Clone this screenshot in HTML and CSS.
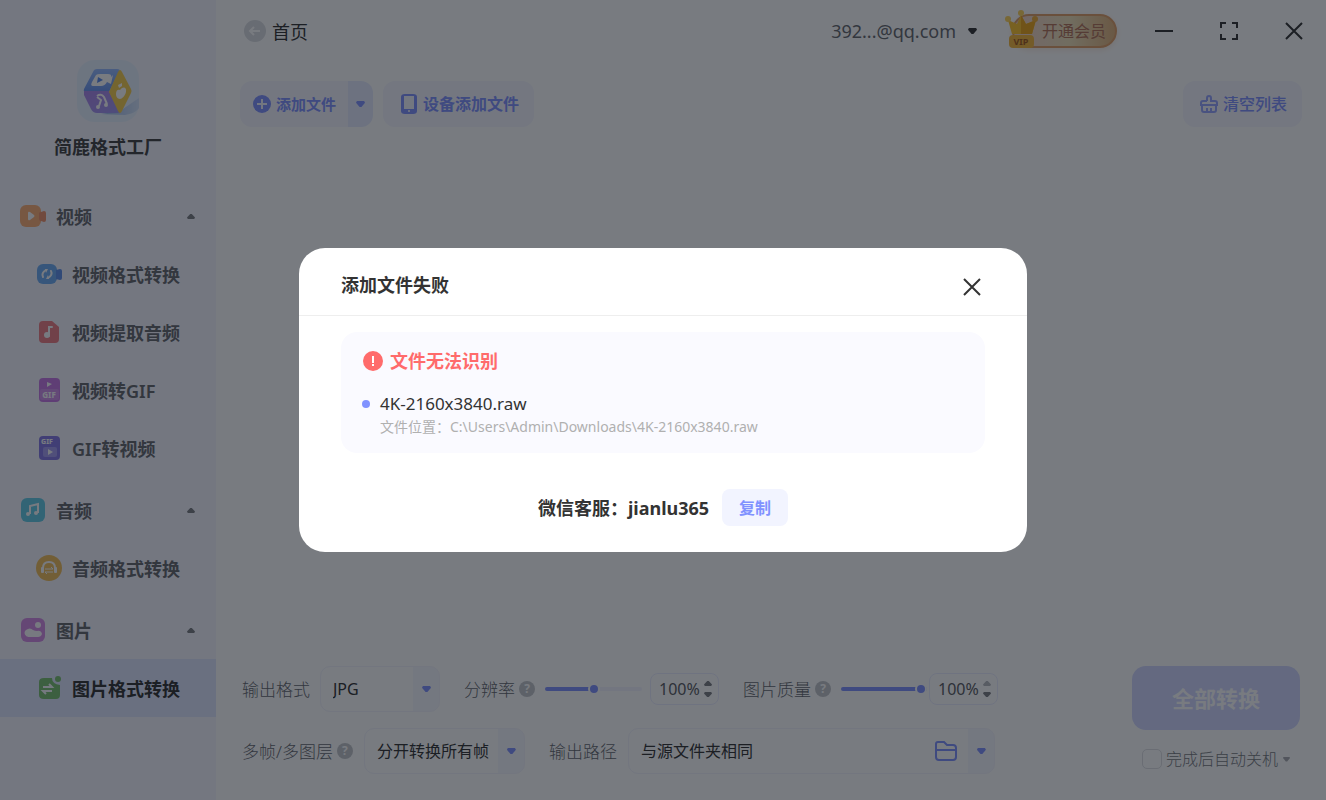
FILE: index.html
```html
<!DOCTYPE html>
<html lang="zh-CN">
<head>
    <meta charset="UTF-8">
    <title>简鹿格式工厂</title>
    <link rel="stylesheet" href="styles.css">
</head>
<body>
    <aside class="sidebar">
        <div class="brand">
            <svg class="brand-logo" viewBox="0 0 62 62">
                <defs>
                    <linearGradient id="cubeTop" x1="0" y1="0" x2="0" y2="1"><stop offset="0" stop-color="#8fb6ff"/><stop offset="1" stop-color="#5c8cee"/></linearGradient>
                    <linearGradient id="cubeLeft" x1="0" y1="0" x2="1" y2="1"><stop offset="0" stop-color="#a77be8"/><stop offset="1" stop-color="#9a90f4"/></linearGradient>
                    <linearGradient id="cubeShadow" x1="0" y1="0" x2="1" y2="0"><stop offset="0" stop-color="#8fb0e8"/><stop offset="1" stop-color="#d4e4fb"/></linearGradient>
                </defs>
                <rect width="62" height="62" rx="18" fill="#e6f1ff"/>
                <path d="M43 51L62 38v10c-3 4-8 6-14 7l-24-1z" fill="url(#cubeShadow)"/>
                <path d="M20 9h20q4 0 2 3L32 32H8q-2-1-1-3l9-17q1-3 4-3z" fill="url(#cubeTop)"/>
                <path d="M7 31h25l11 21q0 1-3 1H20q-4 0-6-4L7 35z" fill="url(#cubeLeft)"/>
                <path d="M43 10q1 0 2 2l9 17q1 2 0 4l-9 18q-1 2-2 2-1 0-2-2l-9-19 9-20q1-2 2-2z" fill="#f7cb3c"/>
                <path d="M19 15q1-1 4-1h8q4 0 3 3l2-2-2 9-4-2q-2 4-6 4H16q-3 0-1-4z" fill="#fff"/>
                <path d="M21 17l5 3-6 3z" fill="#4a80ea"/>
                <path d="M20 36q4-3 7 1l3 7M20 37l4 3-2 6" fill="none" stroke="#fff" stroke-width="2"/>
                <circle cx="21" cy="47" r="2" fill="#fff"/><circle cx="29" cy="45" r="2" fill="#fff"/>
                <path d="M43 30c3-4 7-3 6 2-1 4-4 7-6 7-3 0-4-3-4-5 0-4 2-5 4-4z" fill="#fff"/><path d="M41 25l4-2v3l-3 2z" fill="#fff"/>
            </svg>
            <h1 class="brand-name">简鹿格式工厂</h1>
        </div>
        <nav class="menu">
            <div class="menu-group">
                <a href="#" class="menu-title">
                    <svg class="menu-icon" viewBox="0 0 26 26"><rect x="0" y="2" width="21" height="22" rx="6" fill="#ff9f55"/><path d="M19 10q0-1 2-1l3-1q2 0 2 2v7q0 2-2 2l-3-1q-2 0-2-2z" fill="#f07b4a"/><path d="M8 10q0-2 2-1l4 3q1 1 0 2l-4 3q-2 1-2-1z" fill="#fff"/></svg>
                    <span>视频</span><i class="caret up"></i>
                </a>
                <a href="#" class="menu-item">
                    <svg class="menu-icon" viewBox="0 0 26 26"><rect x="1" y="3" width="20" height="20" rx="6" fill="#4e9cf2"/><path d="M20 9l4-1q2 0 2 2v7q0 2-2 2l-4-1z" fill="#3a78e6"/><path d="M10 9q-5 3-3 7M12 17q5-3 3-7" fill="none" stroke="#fff" stroke-width="2" stroke-linecap="round"/><path d="M9 8h3l-2 4zM13 18h-3l2-4z" fill="#fff"/></svg>
                    <span>视频格式转换</span>
                </a>
                <a href="#" class="menu-item">
                    <svg class="menu-icon" viewBox="0 0 26 26"><path d="M7 2h9l7 6v12q0 4-4 4H7q-4 0-4-4V6q0-4 4-4z" fill="#f06268"/><path d="M13 17V8q1 0 3 0" fill="none" stroke="#fff" stroke-width="2" stroke-linecap="round"/><circle cx="11" cy="16" r="3" fill="#fff"/></svg>
                    <span>视频提取音频</span>
                </a>
                <a href="#" class="menu-item">
                    <svg class="menu-icon" viewBox="0 0 26 26"><rect x="3" y="1" width="21" height="24" rx="4" fill="#bd5be2"/><path d="M11 5l5 2-5 3z" fill="#fff"/><rect x="4" y="12" width="19" height="11" rx="2" fill="#c878e8"/><text class="icon-text" x="13" y="21" font-size="8" text-anchor="middle">GIF</text></svg>
                    <span>视频转GIF</span>
                </a>
                <a href="#" class="menu-item">
                    <svg class="menu-icon" viewBox="0 0 26 26"><rect x="3" y="1" width="21" height="24" rx="4" fill="#6a5be0"/><text class="icon-text" x="11" y="9" font-size="7" text-anchor="middle">GIF</text><rect x="7" y="12" width="14" height="10" rx="2" fill="#9488f0"/><path d="M12 14l5 3-5 3z" fill="#fff"/></svg>
                    <span>GIF转视频</span>
                </a>
            </div>
            <div class="menu-group">
                <a href="#" class="menu-title">
                    <svg class="menu-icon" viewBox="0 0 26 26"><rect x="1" y="1" width="24" height="24" rx="6" fill="#40c2e2"/><path d="M10 17V9l8-2v9" fill="none" stroke="#fff" stroke-width="2"/><circle cx="8" cy="17" r="2" fill="#fff"/><circle cx="16" cy="16" r="2" fill="#fff"/></svg>
                    <span>音频</span><i class="caret up"></i>
                </a>
                <a href="#" class="menu-item">
                    <svg class="menu-icon" viewBox="0 0 26 26"><circle cx="13" cy="13" r="13" fill="#f2b233"/><path d="M7 13q0-6 6-6t6 6" fill="none" stroke="#fff" stroke-width="2"/><rect x="5" y="12" width="3" height="6" rx="1" fill="#fff"/><rect x="18" y="12" width="3" height="6" rx="1" fill="#fff"/><path d="M9 14h8l-2-2M17 17H9l2 2" fill="none" stroke="#fff" stroke-width="1"/></svg>
                    <span>音频格式转换</span>
                </a>
            </div>
            <div class="menu-group">
                <a href="#" class="menu-title">
                    <svg class="menu-icon" viewBox="0 0 26 26"><rect x="1" y="1" width="24" height="24" rx="6" fill="#cf72e0"/><circle cx="18" cy="8" r="3" fill="#fff"/><path d="M9 20a4 4 0 0 1-3-7q4-3 7 0 2 1 4 1 4-1 5 3-1 3-4 3z" fill="#fff"/></svg>
                    <span>图片</span><i class="caret up"></i>
                </a>
                <a href="#" class="menu-item active">
                    <svg class="menu-icon" viewBox="0 0 26 26"><path d="M8 3h8q0 6 8 7v10q0 4-4 4H8q-5 0-5-4V7q0-4 5-4z" fill="#62b850"/><circle cx="22" cy="4" r="3" fill="#62b850"/><path d="M7 12h9l-3-3M16 16H7l3 3" fill="none" stroke="#fff" stroke-width="2"/></svg>
                    <span>图片格式转换</span>
                </a>
            </div>
        </nav>
    </aside>

    <main class="main">
        <header class="topbar">
            <button class="back">
                <svg viewBox="0 0 22 22"><circle cx="11" cy="11" r="11" fill="#dcdee2"/><path d="M16 11H6M10 7l-4 4 4 4" fill="none" stroke="#fff" stroke-width="2"/></svg>
                <span>首页</span>
            </button>
            <div class="topbar-right">
                <button class="account">392...@qq.com<i class="caret"></i></button>
                <button class="vip">
                    <svg class="crown" viewBox="0 0 36 40">
                        <path d="M4 11l9 4 4-9 5 9 10-4-4 14H8z" fill="#ffc530"/>
                        <path d="M17 6l5 9 10-4-4 14H17z" fill="#eda71c"/>
                        <circle cx="4" cy="10" r="3" fill="#ffd45c"/><circle cx="17" cy="4" r="3" fill="#ffd45c"/><circle cx="31" cy="10" r="3" fill="#efad38"/>
                        <rect x="5" y="26" width="25" height="13" rx="4" fill="#f6b93d"/>
                        <text x="17" y="36" font-size="9" text-anchor="middle" class="vip-text">VIP</text>
                    </svg>
                    <span>开通会员</span>
                </button>
                <div class="window-btns">
                    <button aria-label="最小化"><svg viewBox="0 0 18 18"><path d="M0 9h18"/></svg></button>
                    <button aria-label="最大化"><svg viewBox="0 0 18 18"><path d="M1 6V1h5M12 1h5v5M17 12v5h-5M6 17H1v-5"/></svg></button>
                    <button aria-label="关闭"><svg viewBox="0 0 18 18"><path d="M1 1l16 16M17 1L1 17"/></svg></button>
                </div>
            </div>
        </header>

        <div class="toolbar">
            <div class="split">
                <button class="tool-btn small">
                    <svg viewBox="0 0 18 18"><circle cx="9" cy="9" r="9" fill="currentColor"/><path d="M4 9h10M9 4v10" stroke="#f2f4ff" stroke-width="2"/></svg>
                    <span>添加文件</span>
                </button>
                <button class="split-arrow" aria-label="更多"><i class="caret"></i></button>
            </div>
            <button class="tool-btn device">
                <svg viewBox="0 0 18 22"><path d="M5 1h8q4 0 4 3v14q0 3-4 3H5q-4 0-4-3V4q0-3 4-3z" fill="currentColor"/><rect x="4" y="3" width="10" height="13" fill="#f4f5ff"/><circle cx="9" cy="18" r="1" fill="#fff"/></svg>
                <span>设备添加文件</span>
            </button>
            <button class="tool-btn clear">
                <svg viewBox="0 0 18 18" fill="none" stroke="currentColor"><path d="M7 6V3q0-2 2-2t2 2v3h4q2 0 2 2v2H1V8q0-2 2-2h4M2 10v5q0 2 2 2h10q2 0 2-2v-5M7 13v4M11 13v4"/></svg>
                <span>清空列表</span>
            </button>
        </div>

        <section class="file-list"></section>

        <footer class="settings">
            <div class="settings-rows">
                <div class="settings-row">
                    <label class="field-label" for="format">输出格式</label>
                    <div class="select format">
                        <select id="format"><option>JPG</option></select>
                        <i class="caret"></i>
                    </div>
                    <label class="field-label next" for="resolution">分辨率</label>
                    <span class="help">?</span>
                    <input class="slider" id="resolution" type="range" min="0" max="200" value="100" style="--fill: 50%">
                    <div class="spin">
                        <input type="text" value="100%" aria-label="分辨率">
                        <div class="spin-btns">
                            <button aria-label="增加"><i class="caret up"></i></button>
                            <button aria-label="减少"><i class="caret"></i></button>
                        </div>
                    </div>
                    <label class="field-label next" for="quality">图片质量</label>
                    <span class="help">?</span>
                    <input class="slider quality" id="quality" type="range" min="0" max="100" value="100" style="--fill: 100%">
                    <div class="spin">
                        <input type="text" value="100%" aria-label="图片质量">
                        <div class="spin-btns">
                            <button aria-label="增加" disabled><i class="caret up"></i></button>
                            <button aria-label="减少"><i class="caret"></i></button>
                        </div>
                    </div>
                </div>
                <div class="settings-row">
                    <label class="field-label" for="frames">多帧/多图层</label>
                    <span class="help">?</span>
                    <div class="select frames">
                        <select id="frames"><option>分开转换所有帧</option></select>
                        <i class="caret"></i>
                    </div>
                    <label class="field-label next" for="path">输出路径</label>
                    <div class="select path">
                        <select id="path"><option>与源文件夹相同</option></select>
                        <button class="folder" aria-label="打开文件夹"><svg viewBox="0 0 22 20"><path d="M3 1h6l3 3h6q3 0 3 3v9q0 3-3 3H4q-3 0-3-3V3q0-2 2-2zM1 9h20"/></svg></button>
                        <i class="caret"></i>
                    </div>
                </div>
            </div>
            <div class="actions">
                <button class="convert">全部转换</button>
                <div class="shutdown">
                    <input type="checkbox" id="shutdown">
                    <label for="shutdown">完成后自动关机</label>
                    <i class="caret"></i>
                </div>
            </div>
        </footer>
    </main>

    <div class="overlay">
        <div class="dialog" role="dialog" aria-labelledby="dialog-title">
            <div class="dialog-header">
                <h2 id="dialog-title">添加文件失败</h2>
                <button class="dialog-close" aria-label="关闭"><svg viewBox="0 0 18 18"><path d="M1 1l16 16M17 1L1 17"/></svg></button>
            </div>
            <div class="error-box">
                <h3 class="error-title">
                    <svg viewBox="0 0 20 20"><circle cx="10" cy="10" r="10" fill="#ff6b6b"/><path d="M9 5h2v7H9zM9 13h2v2H9z" fill="#fff"/></svg>
                    文件无法识别
                </h3>
                <ul class="error-list">
                    <li>
                        <div class="file-name">4K-2160x3840.raw</div>
                        <div class="file-path">文件位置：C:\Users\Admin\Downloads\4K-2160x3840.raw</div>
                    </li>
                </ul>
            </div>
            <div class="dialog-footer">
                <span>微信客服：jianlu365</span>
                <button class="copy">复制</button>
            </div>
        </div>
    </div>

    <script>
        // 滑块已选部分的长度
        document.querySelectorAll('.slider').forEach(function(slider) {
            slider.addEventListener('input', function() {
                slider.style.setProperty('--fill', slider.value / slider.max * 100 + '%');
            });
        });

        document.querySelector('.dialog-close').addEventListener('click', function() {
            document.querySelector('.overlay').style.display = 'none';
        });
    </script>
</body>
</html>
```
FILE: styles.css
```css
* {
    box-sizing: border-box;
}
body {
    margin: 0;
    min-height: 100vh;
    display: flex;
    background: #fff;
    color: #333;
    font-family: "Noto Sans", "Noto Sans CJK SC", sans-serif;
    font-size: 16px;
    font-weight: 300;
}
button, input, select {
    font: inherit;
    color: inherit;
    border: none;
    background: none;
    padding: 0;
    margin: 0;
}
button {
    cursor: pointer;
}
h1, h2, h3, ul {
    margin: 0;
    padding: 0;
}
svg {
    flex: none;
    display: block;
}
.caret {
    flex: none;
    width: 9px;
    height: 6px;
    background: currentColor;
    clip-path: polygon(10% 0, 90% 0, 100% 30%, 60% 100%, 40% 100%, 0 30%);
}
.caret.up {
    transform: rotate(180deg);
}

/* 左侧菜单 */
.sidebar {
    flex: none;
    width: 216px;
    background: #f5f6ff;
}
.brand {
    height: 187px;
    padding-top: 60px;
    display: flex;
    flex-direction: column;
    align-items: center;
}
.brand-logo {
    width: 62px;
    height: 62px;
    opacity: 0.9;
}
.brand-name {
    margin-top: 12px;
    color: #444;
    font-size: 18px;
    line-height: 26px;
    font-weight: 600;
}
.menu {
    display: flex;
    flex-direction: column;
    gap: 4px;
}
.menu a {
    height: 58px;
    display: flex;
    align-items: center;
    gap: 10px;
    padding: 0 21px 0 20px;
    color: #66686e;
    font-size: 18px;
    font-weight: 600;
    text-decoration: none;
}
.menu a.menu-item {
    padding-left: 36px;
}
.menu a.active {
    background: #dfe6ff;
    color: #333;
}
.menu-icon {
    width: 26px;
    height: 26px;
    opacity: 0.8;
}
.menu .caret {
    width: 8px;
    height: 5px;
    margin-left: auto;
    color: #7c7e84;
}
.icon-text {
    fill: #fff;
    font-weight: 800;
}

/* 顶部 */
.main {
    flex: 1;
    min-width: 0;
    display: flex;
    flex-direction: column;
}
.topbar {
    height: 62px;
    padding: 0 23px 0 28px;
    display: flex;
    align-items: center;
    justify-content: space-between;
}
.back {
    display: flex;
    align-items: center;
    gap: 6px;
    font-size: 18px;
    font-weight: 400;
}
.back svg {
    width: 22px;
    height: 22px;
}
.topbar-right {
    display: flex;
    align-items: center;
}
.account {
    display: flex;
    align-items: center;
    gap: 12px;
    color: #66686e;
    font-size: 18px;
    font-weight: 400;
}
.account .caret {
    color: #333;
}
.vip {
    position: relative;
    width: 105px;
    height: 34px;
    margin: 0 38px 0 35px;
    padding-left: 28px;
    border: 2px solid #e0a068;
    border-radius: 17px;
    background: linear-gradient(90deg, #f3d3cb, #efe0b8 55%, #e0b27c);
    box-shadow: 0 2px 6px #f8ebdf;
    color: #b3735a;
    font-size: 16px;
    font-weight: 400;
    line-height: 28px;
    text-align: left;
    white-space: nowrap;
}
.crown {
    position: absolute;
    left: -10px;
    top: -7px;
    width: 36px;
    height: 40px;
}
.vip-text {
    fill: #a35b20;
    font-weight: 700;
}
.window-btns {
    display: flex;
    gap: 47px;
}
.window-btns svg, .dialog-close svg {
    width: 18px;
    height: 18px;
    fill: none;
    stroke: #333;
    stroke-width: 2;
}

/* 工具栏 */
.toolbar {
    display: flex;
    gap: 10px;
    padding: 19px 24px 0;
}
.split {
    display: flex;
}
.tool-btn {
    height: 46px;
    padding: 0 15px 0 17px;
    display: flex;
    align-items: center;
    gap: 5px;
    border-radius: 12px;
    background: #f5f6ff;
    color: #8092ff;
    font-size: 16px;
    font-weight: 600;
}
.tool-btn span {
    padding-bottom: 2px;
}
.tool-btn svg {
    width: 18px;
    height: 18px;
    stroke-width: 1;
}
.tool-btn.small {
    padding: 0 12px 0 13px;
    border-radius: 12px 0 0 12px;
    font-size: 15px;
}
.tool-btn.device svg {
    height: 22px;
}
.tool-btn.clear {
    margin-left: auto;
    font-weight: 500;
}
.tool-btn.clear svg {
    stroke-width: 2;
    opacity: 0.8;
}
.split-arrow {
    width: 25px;
    display: flex;
    align-items: center;
    justify-content: center;
    border-radius: 0 12px 12px 0;
    background: #e6ecff;
    color: #8092ff;
}
.file-list {
    flex: 1;
}

/* 底部设置 */
.settings {
    display: flex;
    justify-content: space-between;
    padding: 0 26px 26px;
}
.settings-rows {
    display: flex;
    flex-direction: column;
    gap: 16px;
}
.settings-row {
    display: flex;
    align-items: center;
    height: 46px;
}
.field-label {
    padding-bottom: 2px;
    color: #66686e;
    font-size: 17px;
    white-space: nowrap;
}
.field-label.next {
    margin-left: 24px;
}
.help {
    width: 16px;
    height: 16px;
    margin-left: 4px;
    border-radius: 50%;
    background: #c4c6ca;
    color: #fff;
    font-size: 12px;
    font-weight: 700;
    line-height: 16px;
    text-align: center;
}
.select {
    display: flex;
    align-items: center;
    height: 46px;
    margin-left: 10px;
    padding-right: 8px;
    border: 1px solid #f3f4fc;
    border-radius: 10px;
    background: linear-gradient(#f7f8ff, #f7f8ff) right / 26px 100% no-repeat;
    color: #8092ff;
    overflow: hidden;
}
.select select {
    flex: 1;
    min-width: 0;
    height: 44px;
    padding-left: 12px;
    appearance: none;
    color: #333;
    font-weight: 400;
}
.select.format {
    width: 120px;
}
.select.frames {
    width: 161px;
    margin-left: 11px;
}
.select.path {
    width: 367px;
    margin-left: 11px;
}
.folder {
    margin-right: 20px;
}
.folder svg {
    width: 22px;
    height: 20px;
    fill: none;
    stroke: #8092ff;
    stroke-width: 2;
}
.slider {
    width: 97px;
    height: 16px;
    margin-left: 10px;
    appearance: none;
}
.slider.quality {
    width: 86px;
}
.slider::-webkit-slider-runnable-track {
    height: 4px;
    border-radius: 2px;
    background: linear-gradient(90deg, #8092ff var(--fill), #f3f4ff var(--fill));
}
.slider::-webkit-slider-thumb {
    appearance: none;
    width: 12px;
    height: 12px;
    margin-top: -4px;
    border: 2px solid #fff;
    border-radius: 50%;
    background: #8092ff;
}
.spin {
    display: flex;
    align-items: center;
    width: 69px;
    height: 32px;
    margin-left: 8px;
    padding: 0 6px 0 8px;
    border: 1px solid #eceeff;
    border-radius: 8px;
    color: #5a5c62;
    font-weight: 400;
}
.quality + .spin {
    margin-left: 2px;
}
.spin input {
    flex: 1;
    min-width: 0;
}
.spin-btns {
    display: flex;
    flex-direction: column;
    gap: 6px;
    color: #7c7e84;
}
.spin-btns button {
    display: flex;
}
.spin-btns .caret {
    width: 8px;
    height: 5px;
}
.spin-btns button:disabled {
    color: #b8babf;
}
.actions {
    display: flex;
    flex-direction: column;
    align-items: center;
}
.convert {
    width: 168px;
    height: 64px;
    padding-bottom: 2px;
    border-radius: 14px;
    background: #d2d7ff;
    color: #fff;
    font-size: 22px;
    font-weight: 700;
}
.shutdown {
    display: flex;
    align-items: center;
    gap: 4px;
    height: 24px;
    margin-top: 17px;
    color: #77797e;
}
.shutdown input {
    width: 20px;
    height: 20px;
    appearance: none;
    border: 1px solid #dfe1e5;
    border-radius: 5px;
}
.shutdown label {
    padding-bottom: 2px;
}
.shutdown .caret {
    width: 7px;
    height: 5px;
    margin-left: 1px;
    color: #aaacb1;
}

/* 失败提示弹窗 */
.overlay {
    position: fixed;
    inset: 0;
    display: flex;
    align-items: center;
    justify-content: center;
    background: rgba(9, 15, 24, 0.55);
}
.dialog {
    width: 728px;
    max-width: 100%;
    border-radius: 26px;
    background: #fff;
}
.dialog-header {
    display: flex;
    align-items: center;
    justify-content: space-between;
    height: 68px;
    padding: 4px 46px 0 42px;
    border-bottom: 1px solid #eee;
}
.dialog-header h2 {
    font-size: 18px;
    font-weight: 600;
}
.dialog-close {
    padding-top: 6px;
}
.error-box {
    margin: 16px 42px 0;
    padding: 16px 22px 15px 21px;
    border-radius: 16px;
    background: #fafaff;
}
.error-title {
    display: flex;
    align-items: center;
    gap: 7px;
    padding-left: 1px;
    color: #ff6b6b;
    font-size: 18px;
    line-height: 26px;
    font-weight: 700;
}
.error-title svg {
    width: 20px;
    height: 20px;
}
.error-list {
    margin-top: 18px;
    list-style: none;
}
.error-list li {
    position: relative;
    padding-left: 18px;
}
.error-list li::before {
    content: '';
    position: absolute;
    left: 0;
    top: 8px;
    width: 8px;
    height: 8px;
    border-radius: 50%;
    background: #8092ff;
}
.file-name {
    font-size: 17px;
    font-weight: 400;
    line-height: 24px;
}
.file-path {
    color: #b0b0b0;
    font-size: 14px;
    font-weight: 400;
    line-height: 22px;
}
.dialog-footer {
    display: flex;
    align-items: center;
    justify-content: center;
    gap: 13px;
    padding: 36px 0 26px;
    font-size: 18px;
    font-weight: 700;
}
.dialog-footer span {
    padding-bottom: 2px;
}
.copy {
    width: 66px;
    height: 37px;
    padding-bottom: 2px;
    border-radius: 8px;
    background: #f2f4ff;
    color: #8092ff;
    font-size: 16px;
    font-weight: 600;
}
```
